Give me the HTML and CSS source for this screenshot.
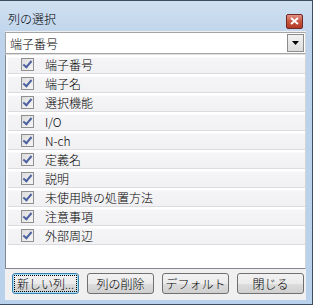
FILE: index.html
```html
<!DOCTYPE html>
<html lang="ja">
<head>
  <meta charset="UTF-8">
  <title>列の選択</title>
  <link rel="stylesheet" href="styles.css">
</head>
<body>
  <div class="window">
    <div class="titlebar">
      <span class="title">列の選択</span>
      <span class="close">
        <svg width="9" height="8" viewBox="0 0 9 8"><path d="M1 1 L8 7 M8 1 L1 7" stroke="#fff" stroke-width="2"/></svg>
      </span>
    </div>
    <div class="client">
      <div class="combo">
        <span class="combo-text">端子番号</span>
        <span class="combo-btn">
          <svg width="7" height="4" viewBox="0 0 7 4"><path d="M0 0 H7 L3.5 4 Z" fill="#000"/></svg>
        </span>
      </div>
      <div class="list">
        <div class="row"><span class="check"></span>端子番号</div>
        <div class="row"><span class="check"></span>端子名</div>
        <div class="row"><span class="check"></span>選択機能</div>
        <div class="row"><span class="check"></span>I/O</div>
        <div class="row"><span class="check"></span>N-ch</div>
        <div class="row"><span class="check"></span>定義名</div>
        <div class="row"><span class="check"></span>説明</div>
        <div class="row"><span class="check"></span>未使用時の処置方法</div>
        <div class="row"><span class="check"></span>注意事項</div>
        <div class="row"><span class="check"></span>外部周辺</div>
      </div>
      <div class="buttons">
        <button class="btn focused"><span>新しい列...</span></button>
        <button class="btn"><span>列の削除</span></button>
        <button class="btn"><span>デフォルト</span></button>
        <button class="btn"><span>閉じる</span></button>
      </div>
    </div>
  </div>
</body>
</html>
```

FILE: styles.css
```css
body {
  margin: 0;
  background: #ffffff;
  font-family: "Noto Sans CJK JP", "DejaVu Sans", sans-serif;
  font-size: 12px;
  font-weight: 300;
  color: #000;
}

.window {
  width: 313px;
  height: 305px;
  box-sizing: border-box;
  border: 1px solid #3e4e62;
  border-left: none;
  background: linear-gradient(#d0e0f1, #bcd3eb 40px, #b9d1ea);
  padding: 0 6px 4px 5px;
  display: flex;
  flex-direction: column;
}

.titlebar {
  height: 30px;
  display: flex;
  align-items: center;
  justify-content: space-between;
  padding: 0 3px 0 3px;
}

.title {
  font-size: 12px;
  margin-top: 4px;
}

.close {
  width: 15px;
  height: 13px;
  margin-top: 10px;
  border: 1px solid #6e2a23;
  border-radius: 2px;
  background: linear-gradient(#e3928a, #c8553f 50%, #b13a25);
  display: flex;
  align-items: center;
  justify-content: center;
}

.client {
  flex: 1;
  background: #f0f0f0;
  display: flex;
  flex-direction: column;
}

.combo {
  margin-top: 1px;
  height: 22px;
  box-sizing: border-box;
  border: 1px solid #a5a5a5;
  border-right-color: #d9d9d9;
  background: #fff;
  display: flex;
  align-items: center;
  justify-content: space-between;
  padding: 0 1px 0 4px;
}

.combo-btn {
  width: 17px;
  height: 18px;
  box-sizing: border-box;
  border: 1px solid #8c8c8c;
  background: linear-gradient(#f2f2f2, #dcdcdc);
  display: flex;
  align-items: center;
  justify-content: center;
}

.list {
  height: 215px;
  box-sizing: border-box;
  border: 1px solid #828790;
  border-top-color: #e0e0e0;
  border-right-color: #d4d4d4;
  background: #ffffff;
  padding: 0 0 0 2px;
}

.row {
  height: 19px;
  box-sizing: border-box;
  display: flex;
  align-items: center;
  background: linear-gradient(#ffffff, #ffffff 2px, #f5f5f7 3px, #f1f1f4);
  border-bottom: 1px solid #dcdce0;
  padding-left: 13px;
}

.check {
  width: 11px;
  height: 11px;
  border: 1px solid #8e8f8f;
  background: linear-gradient(135deg, #dcdcdc, #f6f6f6);
  margin-right: 11px;
  position: relative;
}

.check::after {
  content: "";
  position: absolute;
  left: 3px;
  top: 0px;
  width: 3px;
  height: 7px;
  border: solid #4c61a0;
  border-width: 0 2px 2px 0;
  transform: rotate(40deg);
}

.buttons {
  display: flex;
  gap: 8px;
  padding: 4px 0 0 7px;
}

.btn {
  width: 67px;
  height: 21px;
  padding: 1px;
  border: 1px solid #707070;
  border-radius: 3px;
  background: linear-gradient(#f2f2f2, #ebebeb 50%, #dddddd 51%, #cfcfcf);
  font-family: "Noto Sans CJK JP", "DejaVu Sans", sans-serif;
  font-size: 12px;
  font-weight: 300;
  color: #000;
  display: flex;
  align-items: stretch;
}

.btn span {
  flex: 1;
  display: flex;
  align-items: center;
  justify-content: center;
  border: 1px dotted transparent;
}

.btn.focused {
  border-color: #3c7fb1;
  box-shadow: inset 0 0 0 1px #a6e0f7;
}

.btn.focused span {
  border-color: #000;
}
```
